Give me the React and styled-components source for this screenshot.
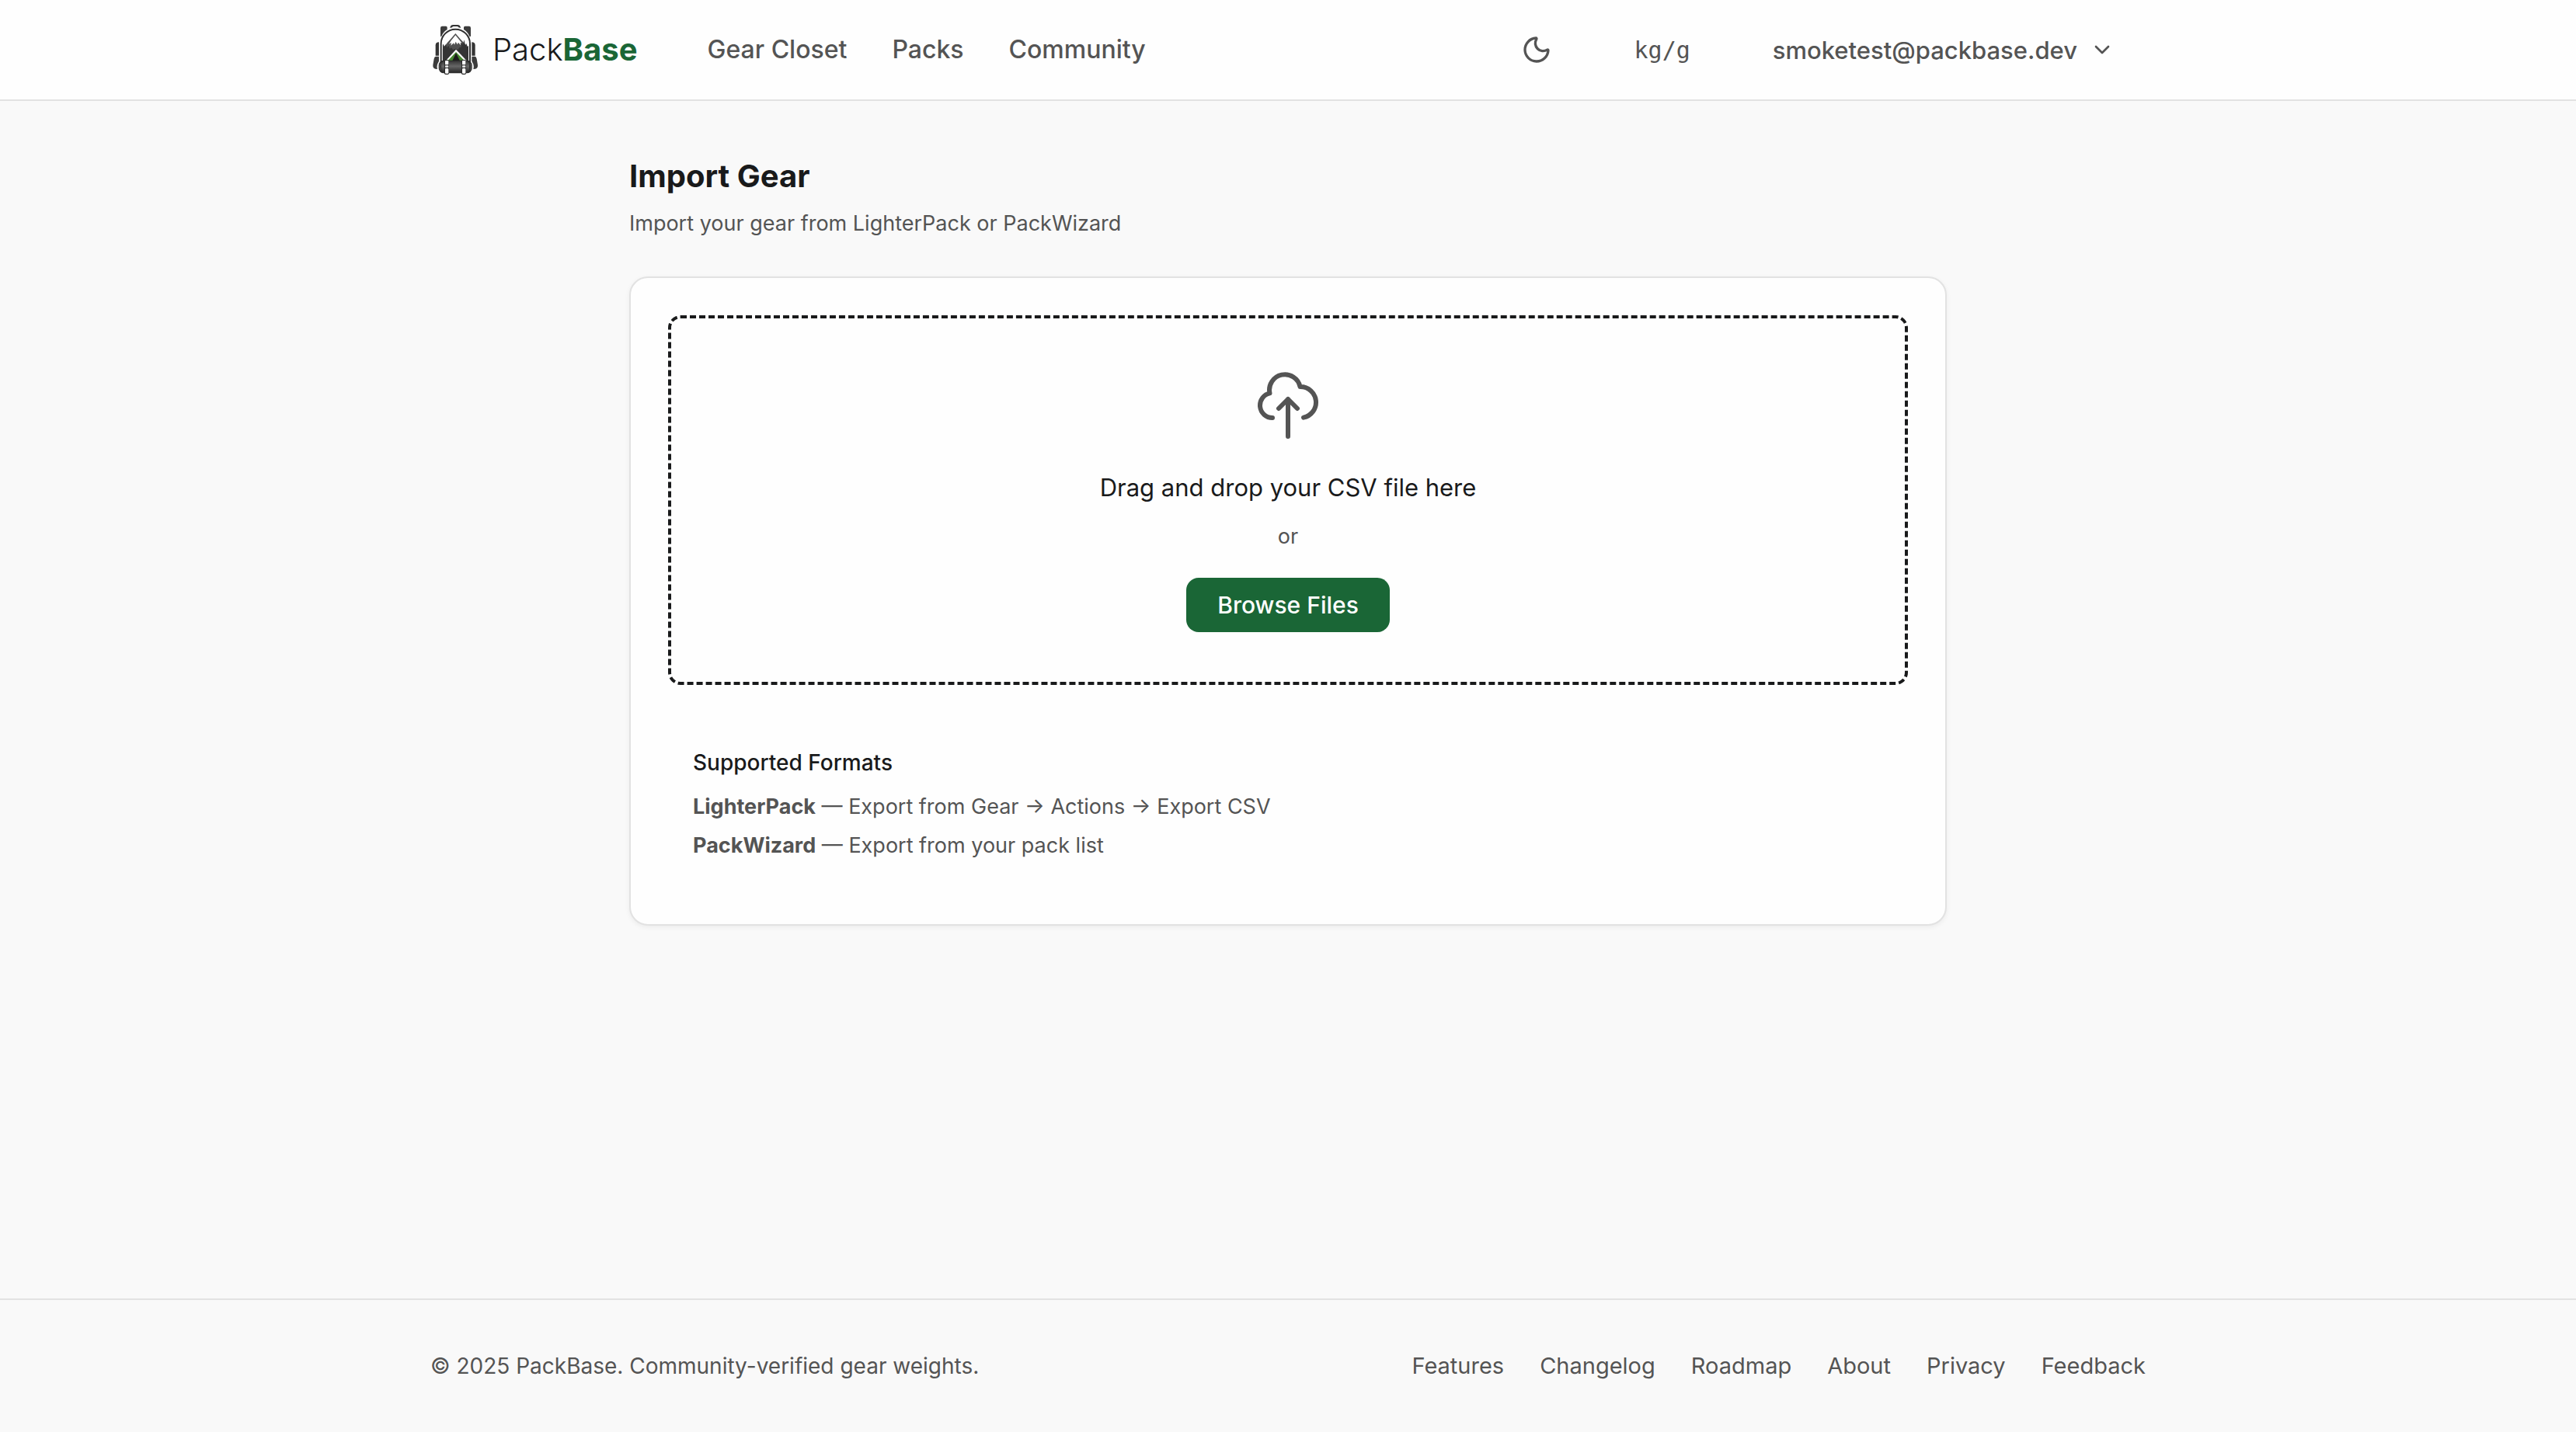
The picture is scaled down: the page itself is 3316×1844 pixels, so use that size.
import React, { useRef } from 'react';
import styled, { createGlobalStyle, ThemeProvider } from 'styled-components';
import { ChevronDown, Moon } from 'lucide-react';

const theme = {
  page: '#f9f9f9',
  surface: '#fefefe',
  border: '#e2e2e2',
  ink: '#191a1b',
  muted: '#545454',
  green: '#1a6636',
  sans: 'Inter, "Liberation Sans", sans-serif',
  mono: '"DejaVu Sans Mono", "Liberation Mono", monospace',
};

const GlobalStyle = createGlobalStyle`
  *, *::before, *::after { box-sizing: border-box; }
  body {
    margin: 0;
    background: ${theme.page};
    color: ${theme.ink};
    font-family: ${theme.sans};
    font-size: 28px;
    -webkit-font-smoothing: antialiased;
  }
  h1, h2, p, ul { margin: 0; padding: 0; }
  ul { list-style: none; }
  a { color: inherit; text-decoration: none; }
  button { font: inherit; color: inherit; cursor: pointer; }
  svg { display: block; flex-shrink: 0; }
`;

const Page = styled.div`
  min-height: 100vh;
  display: flex;
  flex-direction: column;
`;

const Container = styled.div`
  width: 100%;
  max-width: ${(p) => (p.$narrow ? 1792 : 2304)}px;
  margin: 0 auto;
  padding: 0 48px;
`;

const Header = styled.header`
  background: ${(p) => p.theme.surface};
  border-bottom: 2px solid ${(p) => p.theme.border};
`;

const HeaderRow = styled(Container)`
  display: flex;
  align-items: center;
  min-height: 128px;
`;

const Brand = styled.a`
  display: flex;
  align-items: center;
  gap: 16px;
  font-size: 40px;
  line-height: 56px;
  font-weight: 300;
`;

const BrandAccent = styled.span`
  font-weight: 700;
  color: ${(p) => p.theme.green};
`;

const Nav = styled.nav`
  display: flex;
  gap: 58px;
  margin-left: 90px;
  font-size: 32px;
  line-height: 48px;
  font-weight: 500;
  color: ${(p) => p.theme.muted};
`;

const Actions = styled.div`
  display: flex;
  align-items: center;
  gap: 26px;
  margin-left: auto;
`;

const GhostButton = styled.button`
  display: flex;
  align-items: center;
  gap: 16px;
  height: 72px;
  padding: 0 40px;
  border: 0;
  border-radius: 16px;
  background: transparent;
  color: ${(p) => p.theme.muted};
  font-family: ${(p) => (p.$mono ? p.theme.mono : p.theme.sans)};
  font-size: ${(p) => (p.$mono ? 30 : 31)}px;
  font-weight: ${(p) => (p.$mono ? 400 : 500)};
`;

const Main = styled.main`
  flex: 1;
  padding: 64px 0;
`;

const Title = styled.h1`
  font-size: 40px;
  line-height: 66px;
  font-weight: 700;
`;

const Subtitle = styled.p`
  margin-top: 8px;
  font-size: 27px;
  line-height: 40px;
  color: ${(p) => p.theme.muted};
`;

const Card = styled.section`
  margin-top: 48px;
  padding: 48px;
  background: ${(p) => p.theme.surface};
  border: 2px solid ${(p) => p.theme.border};
  border-radius: 24px;
  box-shadow: 0 2px 6px rgba(0, 0, 0, 0.06);
`;

const DropZone = styled.div`
  display: flex;
  flex-direction: column;
  align-items: center;
  padding: 64px;
  border: 4px dashed ${(p) => p.theme.ink};
  border-radius: 16px;
  color: ${(p) => p.theme.muted};
`;

const DropTitle = styled.p`
  margin-top: 32px;
  font-size: 31px;
  line-height: 52px;
  color: ${(p) => p.theme.ink};
`;

const DropOr = styled.p`
  margin-top: 16px;
  font-size: 27px;
  line-height: 42px;
`;

const PrimaryButton = styled.button`
  height: 70px;
  margin-top: 32px;
  padding: 0 40px;
  border: 0;
  border-radius: 16px;
  background: ${(p) => p.theme.green};
  color: #fff;
  font-size: 30px;
  font-weight: 500;
`;

const FileInput = styled.input`
  display: none;
`;

const Formats = styled.div`
  margin-top: 48px;
  padding: 32px;
`;

const FormatsTitle = styled.h2`
  font-size: 28px;
  line-height: 40px;
  font-weight: 500;
`;

const FormatList = styled.ul`
  display: flex;
  flex-direction: column;
  gap: 8px;
  margin-top: 16px;
  font-size: 27px;
  line-height: 42px;
  color: ${(p) => p.theme.muted};
`;

const Footer = styled.footer`
  border-top: 2px solid ${(p) => p.theme.border};
  color: ${(p) => p.theme.muted};
  line-height: 42px;
`;

const FooterRow = styled(Container)`
  display: flex;
  flex-wrap: wrap;
  justify-content: space-between;
  padding-top: 64px;
  padding-bottom: 64px;
`;

const FooterNav = styled.nav`
  display: flex;
  flex-wrap: wrap;
  gap: 0 46px;
  font-size: 29px;
`;

function PackLogo() {
  return (
    <svg width="64" height="64" viewBox="42 66 192 192" aria-hidden="true">
      <defs>
        <linearGradient id="roll" x1="0" y1="0" x2="0" y2="1">
          <stop offset="0" stopColor="#3a3a3a" />
          <stop offset="0.45" stopColor="#666" />
          <stop offset="1" stopColor="#2b2b2b" />
        </linearGradient>
        <clipPath id="window">
          <path d="M89 212V139a50 50 0 0 1 100 0V212Z" />
        </clipPath>
      </defs>
      {/* top lid pieces and carry handle */}
      <path d="M88 71h14q5 0 5 5v8q-16 10-23 28l-3-2V78q0-7 7-7Z" fill="#3c3c3c" />
      <path d="M191 71h-15q-5 0-5 5v8q16 10 23 28l4-2V78q0-7-7-7Z" fill="#3c3c3c" />
      <path d="M118 78q1-12 12-12h17q11 0 12 12l-8-2q-2-4-6-4h-13q-4 0-6 4Z" fill="#333" />
      {/* side pockets */}
      <path d="M75 133q-13 0-13 12v40h13Z" fill="#343434" />
      <path d="M202 133q13 0 13 12v40h-13Z" fill="#343434" />
      <path d="M75 188H63q-5 0-7 9l-4 24q-1 12 9 15l8 1q-3-9 0-19l6-12Z" fill="#3c3c3c" />
      <path d="M202 188h12q5 0 7 9l4 24q1 12-9 15l-8 1q3-9 0-19l-6-12Z" fill="#3c3c3c" />
      {/* main compartment */}
      <path d="M83 208V139a56 56 0 0 1 112 0V208Z" fill="#fefefe" stroke="#303030" strokeWidth="6" />
      <g clipPath="url(#window)">
        <path d="M88 160l20-26 11-12 20-23 20 23 13 14 18 24v54H88Z" fill="#505050" />
        <path d="M139 106l-17 21-8 13 9-5-2 11 11-10 3 7 5-12 6 11 4-8 9 11-1-11 8 5-10-12Z" fill="#fff" />
        <path d="M86 214v-66l6-8 4 10 5-8 5 12 6-8 5 12 6-4 6 8 10-4 9 4 7-10 5 2 4-24 4 14 4-20 5 20 4-6 4 12 6-6v74Z" fill="#343434" />
      </g>
      {/* tent */}
      <path d="M100 206l41-45 43 45Z" fill="#fff" />
      <path d="M109 205l32-34 33 34Z" fill="#46872f" />
      <path d="M127 205l14-30 15 30Z" fill="#1d1d1d" />
      {/* sleeping roll */}
      <rect x="74" y="203" width="129" height="50" rx="20" fill="#2d2d2d" />
      <rect x="84" y="207" width="108" height="42" rx="12" fill="url(#roll)" />
      <path d="M80 215q-4 13 0 26" stroke="#5a5a5a" strokeWidth="3" fill="none" />
      <path d="M197 215q4 13 0 26" stroke="#5a5a5a" strokeWidth="3" fill="none" />
      {/* roll straps */}
      {[97, 163].map((x) => (
        <g key={x}>
          <rect x={x - 1} y="201" width="18" height="57" rx="5" fill="#2a2a2a" />
          <rect x={x + 2} y="204" width="13" height="16" rx="2" fill="#fff" />
          <rect x={x + 2} y="223" width="13" height="8" rx="2" fill="#e4e4e4" />
          <rect x={x + 2} y="234" width="13" height="20" rx="3" fill="#fff" />
        </g>
      ))}
    </svg>
  );
}

function CloudUploadIcon() {
  return (
    <svg
      width="96"
      height="96"
      viewBox="0 0 24 24"
      fill="none"
      stroke="currentColor"
      strokeWidth="1.5"
      strokeLinecap="round"
      strokeLinejoin="round"
      aria-hidden="true"
    >
      <path d="M7 16a4 4 0 01-.88-7.903A5 5 0 1115.9 6L16 6a5 5 0 011 9.9M15 13l-3-3m0 0l-3 3m3-3v12" />
    </svg>
  );
}

const navLinks = ['Gear Closet', 'Packs', 'Community'];
const footerLinks = ['Features', 'Changelog', 'Roadmap', 'About', 'Privacy', 'Feedback'];
const formats = [
  { name: 'LighterPack', hint: 'Export from Gear → Actions → Export CSV' },
  { name: 'PackWizard', hint: 'Export from your pack list' },
];

const slug = (text) => '#' + text.toLowerCase().replace(' ', '-');

export default function App() {
  const fileRef = useRef(null);
  return (
    <ThemeProvider theme={theme}>
      <GlobalStyle />
      <Page>
        <Header>
          <HeaderRow>
            <Brand href="#home">
              <PackLogo />
              <span>
                Pack<BrandAccent>Base</BrandAccent>
              </span>
            </Brand>
            <Nav>
              {navLinks.map((label) => (
                <a key={label} href={slug(label)}>{label}</a>
              ))}
            </Nav>
            <Actions>
              <GhostButton type="button" aria-label="Toggle dark mode">
                <Moon size={40} />
              </GhostButton>
              <GhostButton type="button" $mono>kg/g</GhostButton>
              <GhostButton type="button" aria-haspopup="menu">
                smoketest@packbase.dev
                <ChevronDown size={32} />
              </GhostButton>
            </Actions>
          </HeaderRow>
        </Header>

        <Main>
          <Container $narrow>
            <Title>Import Gear</Title>
            <Subtitle>Import your gear from LighterPack or PackWizard</Subtitle>
            <Card>
              <DropZone>
                <CloudUploadIcon />
                <DropTitle>Drag and drop your CSV file here</DropTitle>
                <DropOr>or</DropOr>
                <PrimaryButton type="button" onClick={() => fileRef.current.click()}>
                  Browse Files
                </PrimaryButton>
                <FileInput ref={fileRef} type="file" accept=".csv" aria-label="CSV file" />
              </DropZone>
              <Formats>
                <FormatsTitle>Supported Formats</FormatsTitle>
                <FormatList>
                  {formats.map(({ name, hint }) => (
                    <li key={name}>
                      <strong>{name}</strong> — {hint}
                    </li>
                  ))}
                </FormatList>
              </Formats>
            </Card>
          </Container>
        </Main>

        <Footer>
          <FooterRow>
            <p>© 2025 PackBase. Community-verified gear weights.</p>
            <FooterNav>
              {footerLinks.map((label) => (
                <a key={label} href={slug(label)}>{label}</a>
              ))}
            </FooterNav>
          </FooterRow>
        </Footer>
      </Page>
    </ThemeProvider>
  );
}
